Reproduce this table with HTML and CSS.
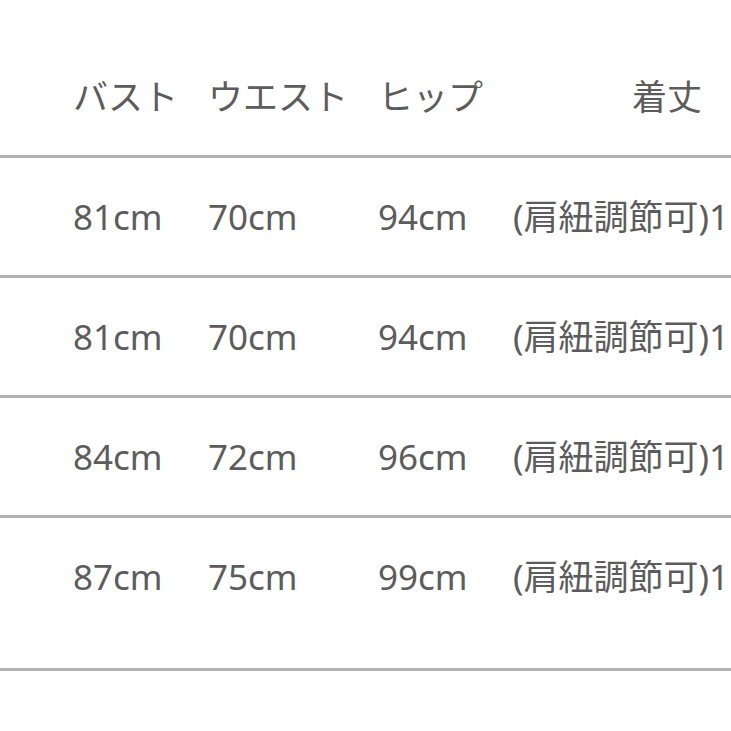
FILE: index.html
```html
<!DOCTYPE html>
<html lang="ja">
<head>
<meta charset="utf-8">
<link rel="stylesheet" href="styles.css">
</head>
<body>
<div class="table">
  <div class="row head">
    <div class="cell">バスト</div>
    <div class="cell">ウエスト</div>
    <div class="cell">ヒップ</div>
    <div class="cell last"><span class="len">着丈</span></div>
  </div>
  <div class="row">
    <div class="cell">81cm</div>
    <div class="cell">70cm</div>
    <div class="cell">94cm</div>
    <div class="cell last">(肩紐調節可)1</div>
  </div>
  <div class="row">
    <div class="cell">81cm</div>
    <div class="cell">70cm</div>
    <div class="cell">94cm</div>
    <div class="cell last">(肩紐調節可)1</div>
  </div>
  <div class="row">
    <div class="cell">84cm</div>
    <div class="cell">72cm</div>
    <div class="cell">96cm</div>
    <div class="cell last">(肩紐調節可)1</div>
  </div>
  <div class="row final">
    <div class="cell">87cm</div>
    <div class="cell">75cm</div>
    <div class="cell">99cm</div>
    <div class="cell last">(肩紐調節可)1</div>
  </div>
</div>
</body>
</html>
```

FILE: styles.css
```css
html, body {
  margin: 0;
  padding: 0;
  background: #ffffff;
  overflow: hidden;
}
body {
  width: 731px;
  height: 731px;
  font-family: "Noto Sans", "Noto Sans CJK JP", sans-serif;
  font-size: 35px;
  color: #5c5c5c;
}
.table {
  padding-top: 38px;
}
.row {
  display: grid;
  grid-template-columns: 135px 170px 135px 1fr;
  padding-left: 73px;
  height: 117px;
  align-items: center;
  border-bottom: 3px solid #b1b1b1;
}
.row.final {
  padding-bottom: 33px;
}
.cell {
  white-space: nowrap;
  line-height: 48px;
}
.len {
  padding-left: 119px;
}
```
